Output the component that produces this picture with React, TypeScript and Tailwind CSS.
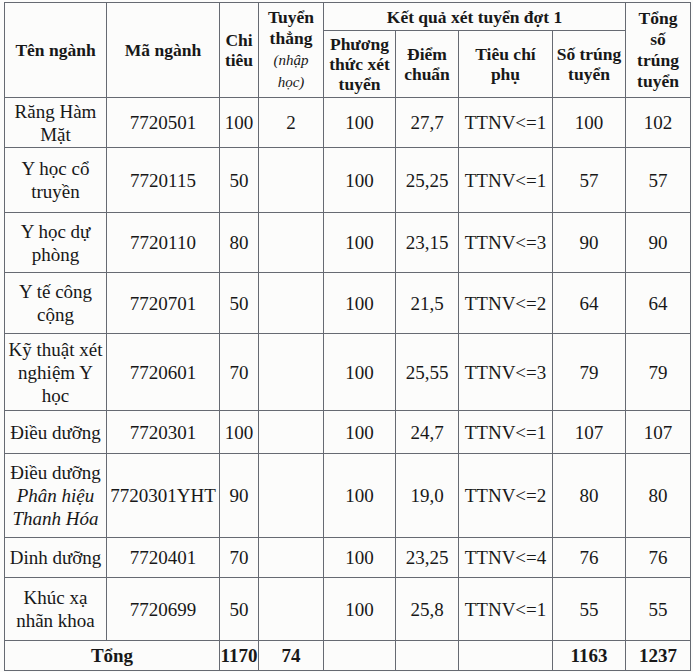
import type { ReactNode } from 'react';

type Row = {
  name: ReactNode;
  code: string;
  quota: string;
  direct: string;
  score: string;
  crit: string;
  pass: string;
  total: string;
  h: string;
};

const rows: Row[] = [
  { name: <>Răng Hàm<br />Mặt</>, code: '7720501', quota: '100', direct: '2', score: '27,7', crit: 'TTNV<=1', pass: '100', total: '102', h: 'h-[50px]' },
  { name: <>Y học cổ<br />truyền</>, code: '7720115', quota: '50', direct: '', score: '25,25', crit: 'TTNV<=1', pass: '57', total: '57', h: 'h-[65px]' },
  { name: <>Y học dự<br />phòng</>, code: '7720110', quota: '80', direct: '', score: '23,15', crit: 'TTNV<=3', pass: '90', total: '90', h: 'h-[60px]' },
  { name: <>Y tế công<br />cộng</>, code: '7720701', quota: '50', direct: '', score: '21,5', crit: 'TTNV<=2', pass: '64', total: '64', h: 'h-[61px]' },
  { name: <>Kỹ thuật xét<br />nghiệm Y<br />học</>, code: '7720601', quota: '70', direct: '', score: '25,55', crit: 'TTNV<=3', pass: '79', total: '79', h: 'h-[77px]' },
  { name: <>Điều dưỡng</>, code: '7720301', quota: '100', direct: '', score: '24,7', crit: 'TTNV<=1', pass: '107', total: '107', h: 'h-[43px]' },
  {
    name: <>Điều dưỡng<br /><i>Phân hiệu</i><br /><i>Thanh Hóa</i></>,
    code: '7720301YHT', quota: '90', direct: '', score: '19,0', crit: 'TTNV<=2', pass: '80', total: '80', h: 'h-[84px]',
  },
  { name: <>Dinh dưỡng</>, code: '7720401', quota: '70', direct: '', score: '23,25', crit: 'TTNV<=4', pass: '76', total: '76', h: 'h-[40px]' },
  { name: <>Khúc xạ<br />nhãn khoa</>, code: '7720699', quota: '50', direct: '', score: '25,8', crit: 'TTNV<=1', pass: '55', total: '55', h: 'h-[63px]' },
];

const cell = 'border border-[#666a72] text-center align-middle px-0 whitespace-nowrap';
const th = `${cell} font-bold text-[17.5px] leading-[20px]`;
const td = `${cell} text-[19px] leading-[23px]`;

export default function App() {
  return (
    <div className="min-h-screen bg-[#fcfcfb] pl-[4px] pt-[2px] text-[#181818] [font-family:Liberation_Serif,Times_New_Roman,serif]">
      <table className="table-fixed border-collapse w-[686px]">
        <colgroup>
          <col className="w-[102px]" />
          <col className="w-[113px]" />
          <col className="w-[39px]" />
          <col className="w-[65px]" />
          <col className="w-[72px]" />
          <col className="w-[63px]" />
          <col className="w-[94px]" />
          <col className="w-[73px]" />
          <col className="w-[65px]" />
        </colgroup>
        <thead>
          <tr className="h-[28px]">
            <th rowSpan={2} className={th}>Tên ngành</th>
            <th rowSpan={2} className={th}>Mã ngành</th>
            <th rowSpan={2} className={th}>Chi<br />tiêu</th>
            <th rowSpan={2} className={`${th} leading-[21px]`}>
              Tuyển<br />thẳng<br />
              <span className="italic font-normal text-[15px]">(nhập<br />học)</span>
            </th>
            <th colSpan={4} className={th}>Kết quả xét tuyển đợt 1</th>
            <th rowSpan={2} className={`${th} leading-[21px]`}>Tổng<br />số<br />trúng<br />tuyển</th>
          </tr>
          <tr className="h-[67px]">
            <th className={th}>Phương<br />thức xét<br />tuyển</th>
            <th className={th}>Điểm<br />chuẩn</th>
            <th className={th}>Tiêu chí<br />phụ</th>
            <th className={th}>Số trúng<br />tuyển</th>
          </tr>
        </thead>
        <tbody>
          {rows.map((r) => (
            <tr key={r.code} className={r.h}>
              <td className={td}>{r.name}</td>
              <td className={td}>{r.code}</td>
              <td className={td}>{r.quota}</td>
              <td className={td}>{r.direct}</td>
              <td className={td}>100</td>
              <td className={td}>{r.score}</td>
              <td className={td}>{r.crit}</td>
              <td className={td}>{r.pass}</td>
              <td className={td}>{r.total}</td>
            </tr>
          ))}
          <tr className="h-[30px]">
            <td colSpan={2} className={`${td} font-bold`}>Tổng</td>
            <td className={`${td} font-bold`}>1170</td>
            <td className={`${td} font-bold`}>74</td>
            <td className={td}></td>
            <td className={td}></td>
            <td className={td}></td>
            <td className={`${td} font-bold`}>1163</td>
            <td className={`${td} font-bold`}>1237</td>
          </tr>
        </tbody>
      </table>
    </div>
  );
}
